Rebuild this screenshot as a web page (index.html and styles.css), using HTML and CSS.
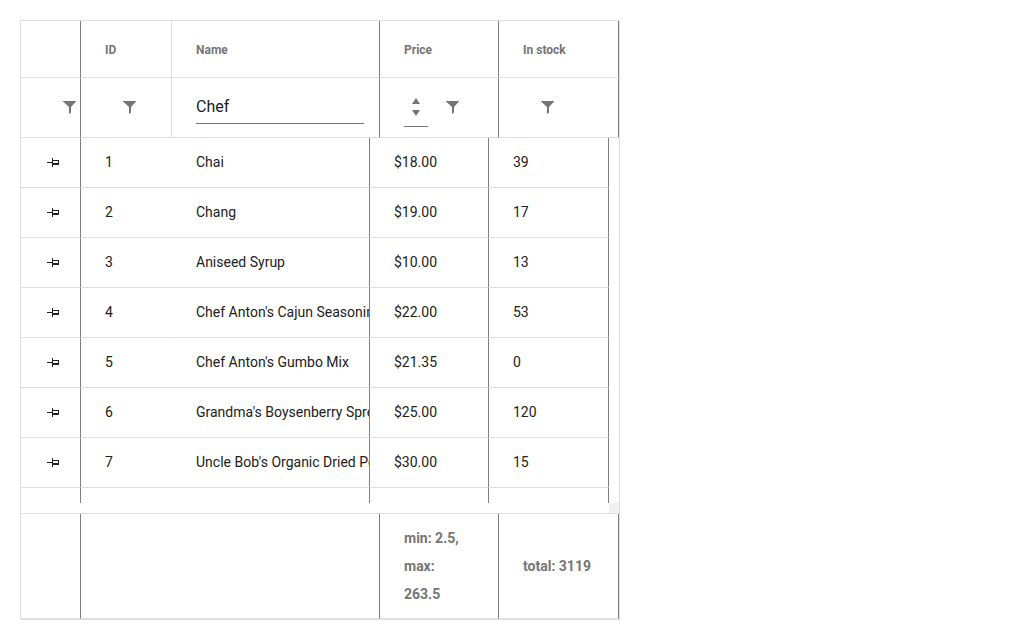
FILE: index.html
```html
<!DOCTYPE html>
<html lang="en">
<head>
<meta charset="utf-8">
<title>Products</title>
<link rel="stylesheet" href="styles.css">
</head>
<body>
<svg class="sprite" aria-hidden="true">
  <symbol id="funnel" viewBox="0 0 14 14"><path d="M1 1h13v.6L9 7v5.500L7 14V7L1 1.600z" fill="currentColor"/></symbol>
  <symbol id="pin" viewBox="0 0 16 9"><path d="M2 4h5v1H2zM7 0h1v9H7zM8 2h6v5H8zM8 3v2h5V3z" fill="currentColor" fill-rule="evenodd" shape-rendering="crispEdges"/></symbol>
</svg>
<main class="grid">
  <table class="table head">
    <colgroup><col class="col-pin"><col class="col-id"><col><col class="col-price"><col class="col-stock"></colgroup>
    <thead>
      <tr class="titles">
        <th class="edge"></th><th scope="col">ID</th><th scope="col" class="edge">Name</th><th scope="col" class="edge">Price</th><th scope="col" class="edge">In stock</th>
      </tr>
      <tr class="filters">
        <td class="edge"><button class="filter" type="button" aria-label="Filter pinned"><svg class="funnel"><use href="#funnel"/></svg></button></td>
        <td><button class="filter" type="button" aria-label="Filter ID"><svg class="funnel"><use href="#funnel"/></svg></button></td>
        <td class="edge name-filter"><input class="text" type="text" value="Chef" aria-label="Filter name"></td>
        <td class="edge">
          <div class="tools">
            <div class="number">
              <input class="value" type="text" inputmode="numeric" aria-label="Filter price">
              <button class="step" type="button" aria-label="Increase"><svg class="arrow" viewBox="0 0 8 6"><path d="M0 6L4 0L8 6z" fill="currentColor"/></svg></button>
              <button class="step" type="button" aria-label="Decrease"><svg class="arrow" viewBox="0 0 8 6"><path d="M0 0L4 6L8 0z" fill="currentColor"/></svg></button>
            </div>
            <button class="filter" type="button" aria-label="Filter price"><svg class="funnel"><use href="#funnel"/></svg></button>
          </div>
        </td>
        <td class="edge"><button class="filter" type="button" aria-label="Filter stock"><svg class="funnel"><use href="#funnel"/></svg></button></td>
      </tr>
    </thead>
  </table>
  <div class="viewport">
    <table class="table rows">
      <colgroup><col class="col-pin"><col class="col-id"><col><col class="col-price"><col class="col-stock"></colgroup>
      <tbody>
        <tr><td class="edge pin-cell"><button class="pin" type="button" aria-label="Pin row 1"><svg class="pin-icon"><use href="#pin"/></svg></button></td><td>1</td><td class="edge">Chai</td><td class="edge">$18.00</td><td class="edge">39</td></tr>
        <tr><td class="edge pin-cell"><button class="pin" type="button" aria-label="Pin row 2"><svg class="pin-icon"><use href="#pin"/></svg></button></td><td>2</td><td class="edge">Chang</td><td class="edge">$19.00</td><td class="edge">17</td></tr>
        <tr><td class="edge pin-cell"><button class="pin" type="button" aria-label="Pin row 3"><svg class="pin-icon"><use href="#pin"/></svg></button></td><td>3</td><td class="edge">Aniseed Syrup</td><td class="edge">$10.00</td><td class="edge">13</td></tr>
        <tr><td class="edge pin-cell"><button class="pin" type="button" aria-label="Pin row 4"><svg class="pin-icon"><use href="#pin"/></svg></button></td><td>4</td><td class="edge">Chef Anton's Cajun Seasoning</td><td class="edge">$22.00</td><td class="edge">53</td></tr>
        <tr><td class="edge pin-cell"><button class="pin" type="button" aria-label="Pin row 5"><svg class="pin-icon"><use href="#pin"/></svg></button></td><td>5</td><td class="edge">Chef Anton's Gumbo Mix</td><td class="edge">$21.35</td><td class="edge">0</td></tr>
        <tr><td class="edge pin-cell"><button class="pin" type="button" aria-label="Pin row 6"><svg class="pin-icon"><use href="#pin"/></svg></button></td><td>6</td><td class="edge">Grandma's Boysenberry Spread</td><td class="edge">$25.00</td><td class="edge">120</td></tr>
        <tr><td class="edge pin-cell"><button class="pin" type="button" aria-label="Pin row 7"><svg class="pin-icon"><use href="#pin"/></svg></button></td><td>7</td><td class="edge">Uncle Bob's Organic Dried Pears</td><td class="edge">$30.00</td><td class="edge">15</td></tr>
        <tr><td class="edge"></td><td></td><td class="edge"></td><td class="edge"></td><td class="edge"></td></tr>
      </tbody>
    </table>
  </div>
  <div class="track"><span class="corner"></span></div>
  <table class="table foot">
    <colgroup><col class="col-pin"><col class="col-id"><col><col class="col-price"><col class="col-stock"></colgroup>
    <tfoot>
      <tr><td class="edge"></td><td></td><td class="edge"></td><td class="edge">min: 2.5, max: 263.5</td><td class="edge">total: 3119</td></tr>
    </tfoot>
  </table>
</main>
</body>
</html>
```
FILE: styles.css
```css
* {
  box-sizing: border-box;
}

body {
  margin: 0;
  padding: 20px;
  background: #fff;
  color: #212121;
  font-family: Roboto, "Liberation Sans", sans-serif;
  font-size: 14px;
  line-height: 28px;
}

button,
input {
  margin: 0;
  padding: 0;
  border: 0;
  background: none;
  color: inherit;
  font: inherit;
}

.sprite {
  position: absolute;
  width: 0;
  height: 0;
}

.grid {
  max-width: 600px;
  border: 1px solid #dfdfdf;
}

.table {
  width: 100%;
  table-layout: fixed;
  border-collapse: separate;
  border-spacing: 0;
}

.col-pin { width: 60px; }
.col-id { width: 91px; }
.col-price { width: 119px; }
.col-stock { width: 120px; }

.table th,
.table td {
  padding: 0 0 0 24px;
  border-right: 1px solid #dfdfdf;
  border-bottom: 1px solid #dfdfdf;
  text-align: left;
  vertical-align: middle;
  overflow: hidden;
}

.table .edge {
  border-right-color: #7f7f7f;
}

.titles {
  height: 57px;
  color: #757575;
  font-size: 12px;
}

.table .titles th {
  padding-top: 2px;
}

.filters {
  height: 60px;
}

.table .filters td {
  padding-bottom: 2px;
}

.table .filters .name-filter {
  padding-right: 15px;
  padding-bottom: 0;
}

.filter {
  display: flex;
  align-items: center;
  justify-content: center;
  width: 48px;
  height: 32px;
  color: #757575;
}

.funnel {
  width: 14px;
  height: 14px;
}

.text {
  display: block;
  width: 100%;
  height: 32px;
  padding-bottom: 2px;
  border-bottom: 1px solid #757575;
  border-radius: 0;
  font-size: 16px;
  outline: 0;
}

.tools {
  display: flex;
  align-items: center;
}

.number {
  display: flex;
  flex-direction: column;
  align-items: center;
  justify-content: center;
  gap: 6px;
  width: 24px;
  height: 40px;
  padding-bottom: 5px;
  border-bottom: 1px solid #757575;
  color: #757575;
}

.value {
  width: 0;
  height: 0;
}

.step {
  display: flex;
}

.arrow {
  width: 8px;
  height: 6px;
}

.viewport {
  height: 365px;
  padding-right: 10px;
  overflow: hidden;
}

.rows tr {
  height: 50px;
}

.table.rows td {
  padding-bottom: 2px;
  white-space: nowrap;
}

.table.rows .pin-cell {
  padding-bottom: 0;
}

.rows td:not(.edge),
.foot td:not(.edge) {
  border-right-color: #fff;
}

.pin {
  display: flex;
}

.pin-icon {
  width: 16px;
  height: 9px;
}

.track {
  display: flex;
  justify-content: flex-end;
  height: 11px;
  border-bottom: 1px solid #dfdfdf;
}

.corner {
  width: 10px;
  background: #f0f0f0;
}

.foot {
  color: #757575;
  font-weight: bold;
}

.foot tr {
  height: 105px;
}

.table.foot td {
  padding: 10px 24px;
}

.table.foot td:last-child {
  padding-right: 0;
}
```
